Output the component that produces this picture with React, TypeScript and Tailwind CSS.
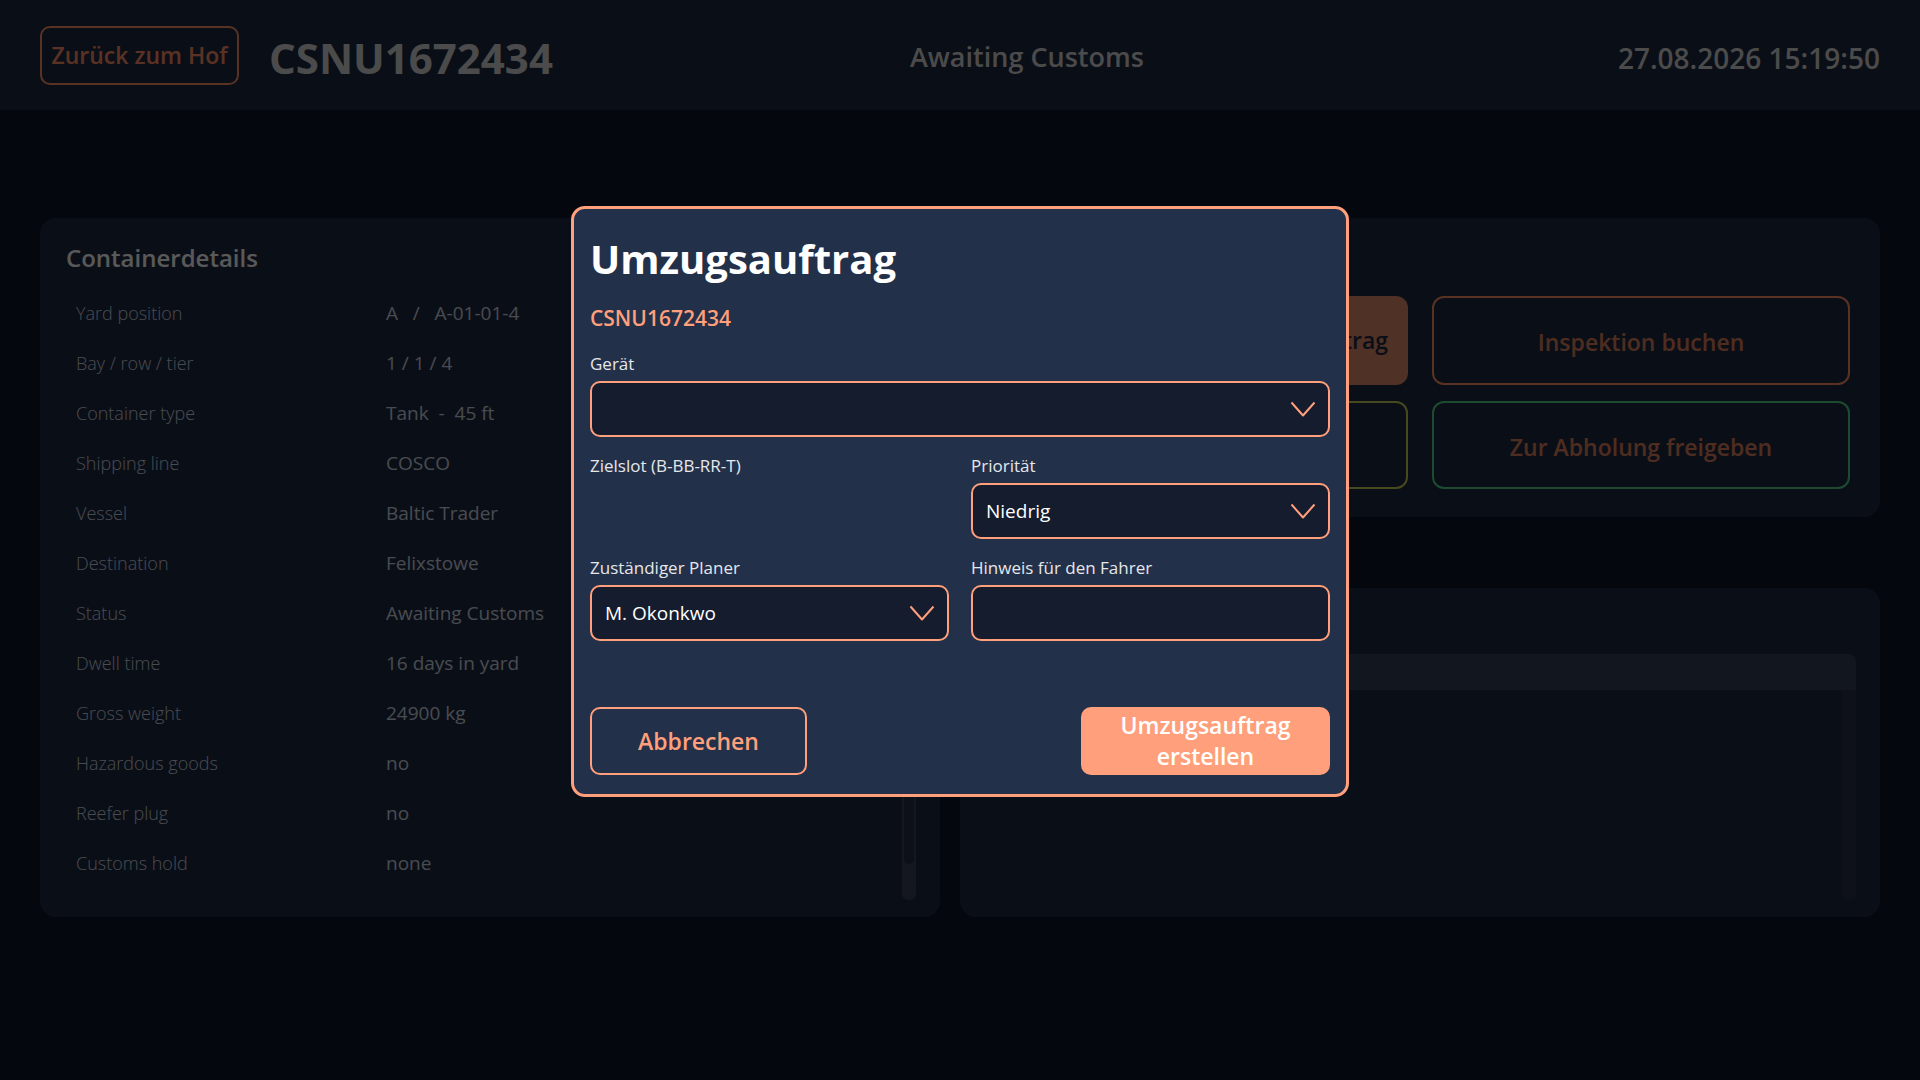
import React from "react";

const details: [string, string][] = [
  ["Yard position", "A   /   A-01-01-4"],
  ["Bay / row / tier", "1 / 1 / 4"],
  ["Container type", "Tank  -  45 ft"],
  ["Shipping line", "COSCO"],
  ["Vessel", "Baltic Trader"],
  ["Destination", "Felixstowe"],
  ["Status", "Awaiting Customs"],
  ["Dwell time", "16 days in yard"],
  ["Gross weight", "24900 kg"],
  ["Hazardous goods", "no"],
  ["Reefer plug", "no"],
  ["Customs hold", "none"],
];

const Chevron = () => (
  <svg width="26" height="16" viewBox="0 0 26 16" fill="none">
    <polyline points="1.5,1.5 13,14.5 24.5,1.5" stroke="#ff9f7b" strokeWidth="2" strokeLinejoin="round" />
  </svg>
);

const Select = ({ value }: { value?: string }) => (
  <div className="flex h-[56px] items-center justify-between rounded-[10px] border-2 border-[#ff9f7b] bg-[#151c2e] pl-[13px] pr-3">
    <span className="text-[19px] font-medium text-white">{value ?? ""}</span>
    <Chevron />
  </div>
);

const FieldLabel = ({ children }: { children: React.ReactNode }) => (
  <div className="h-[24px] text-[17px] leading-[24px] text-[#e5e7eb]">{children}</div>
);

export default function App() {
  return (
    <div className="min-h-screen bg-[#0e1728] font-['Open_Sans',sans-serif]">
      <header className="flex h-[110px] items-center bg-[#1f2b42] px-10 pt-[5px]">
        <div className="flex w-[870px] items-center gap-[30px]">
          <button className="-mt-[4px] h-[59px] w-[199px] rounded-[10px] border-2 border-[#ff9166] text-[23px] font-semibold text-[#ff9166]">
            Zurück zum Hof
          </button>
          <h1 className="-mt-[1px] text-[42px] font-bold text-[#d6d6d6]">CSNU1672434</h1>
        </div>
        <div className="text-[27px] font-semibold text-[#d6d6d6]">Awaiting Customs</div>
        <div className="ml-auto text-[28px] font-semibold text-[#d6d6d6]">27.08.2026 15:19:50</div>
      </header>

      <main className="grid grid-cols-[900px_1fr] gap-5 px-10 pt-[108px]">
        {/* container details */}
        <section className="rounded-2xl bg-[#1f2b42] px-6 pb-[17px] pt-6">
          <h2 className="ml-[2px] text-[24px] font-semibold leading-[32px] text-white">Containerdetails</h2>
          <div className="mt-[14px] flex h-[612px]">
            <div className="flex-1">
              {details.map(([label, value]) => (
                <div key={label} className="flex h-[50px] items-center pl-3 text-[#cfd6e2]">
                  <span className="w-[310px] text-[18px] font-light">{label}</span>
                  <span className="whitespace-pre text-[19px] font-normal">{value}</span>
                </div>
              ))}
            </div>
            <div className="flex w-[14px] flex-col rounded-md bg-[#394256]">
              <div className="mx-[2px] h-[576px] rounded-b-md bg-[#252e42]" />
            </div>
          </div>
        </section>

        <div className="flex flex-col">
          {/* actions */}
          <section className="rounded-2xl bg-[#1f2b42] px-[30px] pb-7 pt-6">
            <h2 className="text-[24px] font-semibold leading-[32px] text-white">Aktionen</h2>
            <div className="mt-[22px] grid grid-cols-2 gap-x-6 gap-y-4">
              <button className="flex h-[89px] items-center justify-end rounded-xl bg-[#e28c6d] pr-5 text-[23px] font-semibold text-[#1f2b42]">
                Umzugsauftrag
              </button>
              <button className="h-[89px] rounded-xl border-2 border-[#ff9166] pt-1 text-[23px] font-semibold text-[#e0825e]">
                Inspektion buchen
              </button>
              <button className="h-[88px] rounded-xl border-2 border-[#c8cd56] text-[23px] font-semibold text-[#e0825e]">
                Sperren
              </button>
              <button className="h-[88px] rounded-xl border-2 border-[#56d689] pt-1 text-[23px] font-semibold text-[#e0825e]">
                Zur Abholung freigeben
              </button>
            </div>
          </section>

          {/* move history */}
          <section className="mt-[71px] flex flex-1 flex-col rounded-2xl bg-[#1f2b42] px-6 pb-[17px] pt-6">
            <h2 className="text-[24px] font-semibold leading-[32px] text-white">Verlauf</h2>
            <div className="mt-[10px] h-9 rounded-t-lg bg-[#363f56]" />
            <div className="flex flex-1 justify-end">
              <div className="w-[14px] rounded-b-md bg-[#283145]" />
            </div>
          </section>
        </div>
      </main>

      {/* move order dialog */}
      <div className="fixed inset-0 flex items-start justify-center bg-black/65 pt-[206px]">
        <div className="w-[778px] rounded-[14px] border-[3px] border-[#ff9f7b] bg-[#233049] px-4 pb-[19px] pt-[26px]">
          <h2 className="text-[40px] font-bold leading-[48px] text-white">Umzugsauftrag</h2>
          <div className="mt-[21px] text-[21px] font-semibold leading-[28px] text-[#ff9f7b]">CSNU1672434</div>

          <div className="mt-[20px]">
            <FieldLabel>Gerät</FieldLabel>
            <div className="mt-[5px]">
              <Select />
            </div>
          </div>

          <div className="mt-[17px] grid grid-cols-2 gap-x-[22px] gap-y-[17px]">
            <div>
              <FieldLabel>Zielslot (B-BB-RR-T)</FieldLabel>
              <div className="mt-[5px] h-[56px]" />
            </div>
            <div>
              <FieldLabel>Priorität</FieldLabel>
              <div className="mt-[5px]">
                <Select value="Niedrig" />
              </div>
            </div>
            <div>
              <FieldLabel>Zuständiger Planer</FieldLabel>
              <div className="mt-[5px]">
                <Select value="M. Okonkwo" />
              </div>
            </div>
            <div>
              <FieldLabel>Hinweis für den Fahrer</FieldLabel>
              <input className="mt-[5px] h-[56px] w-full rounded-[10px] border-2 border-[#ff9f7b] bg-[#151c2e] px-[13px] text-[19px] text-white outline-none" />
            </div>
          </div>

          <div className="mt-[66px] flex justify-between">
            <button className="h-[68px] w-[217px] rounded-[10px] border-2 border-[#ff9f7b] text-[23px] font-semibold text-[#ff9f7b]">
              Abbrechen
            </button>
            <button className="h-[68px] w-[249px] rounded-[10px] bg-[#ff9f7b] px-4 text-[23px] font-semibold leading-[31px] text-white">
              Umzugsauftrag erstellen
            </button>
          </div>
        </div>
      </div>
    </div>
  );
}
